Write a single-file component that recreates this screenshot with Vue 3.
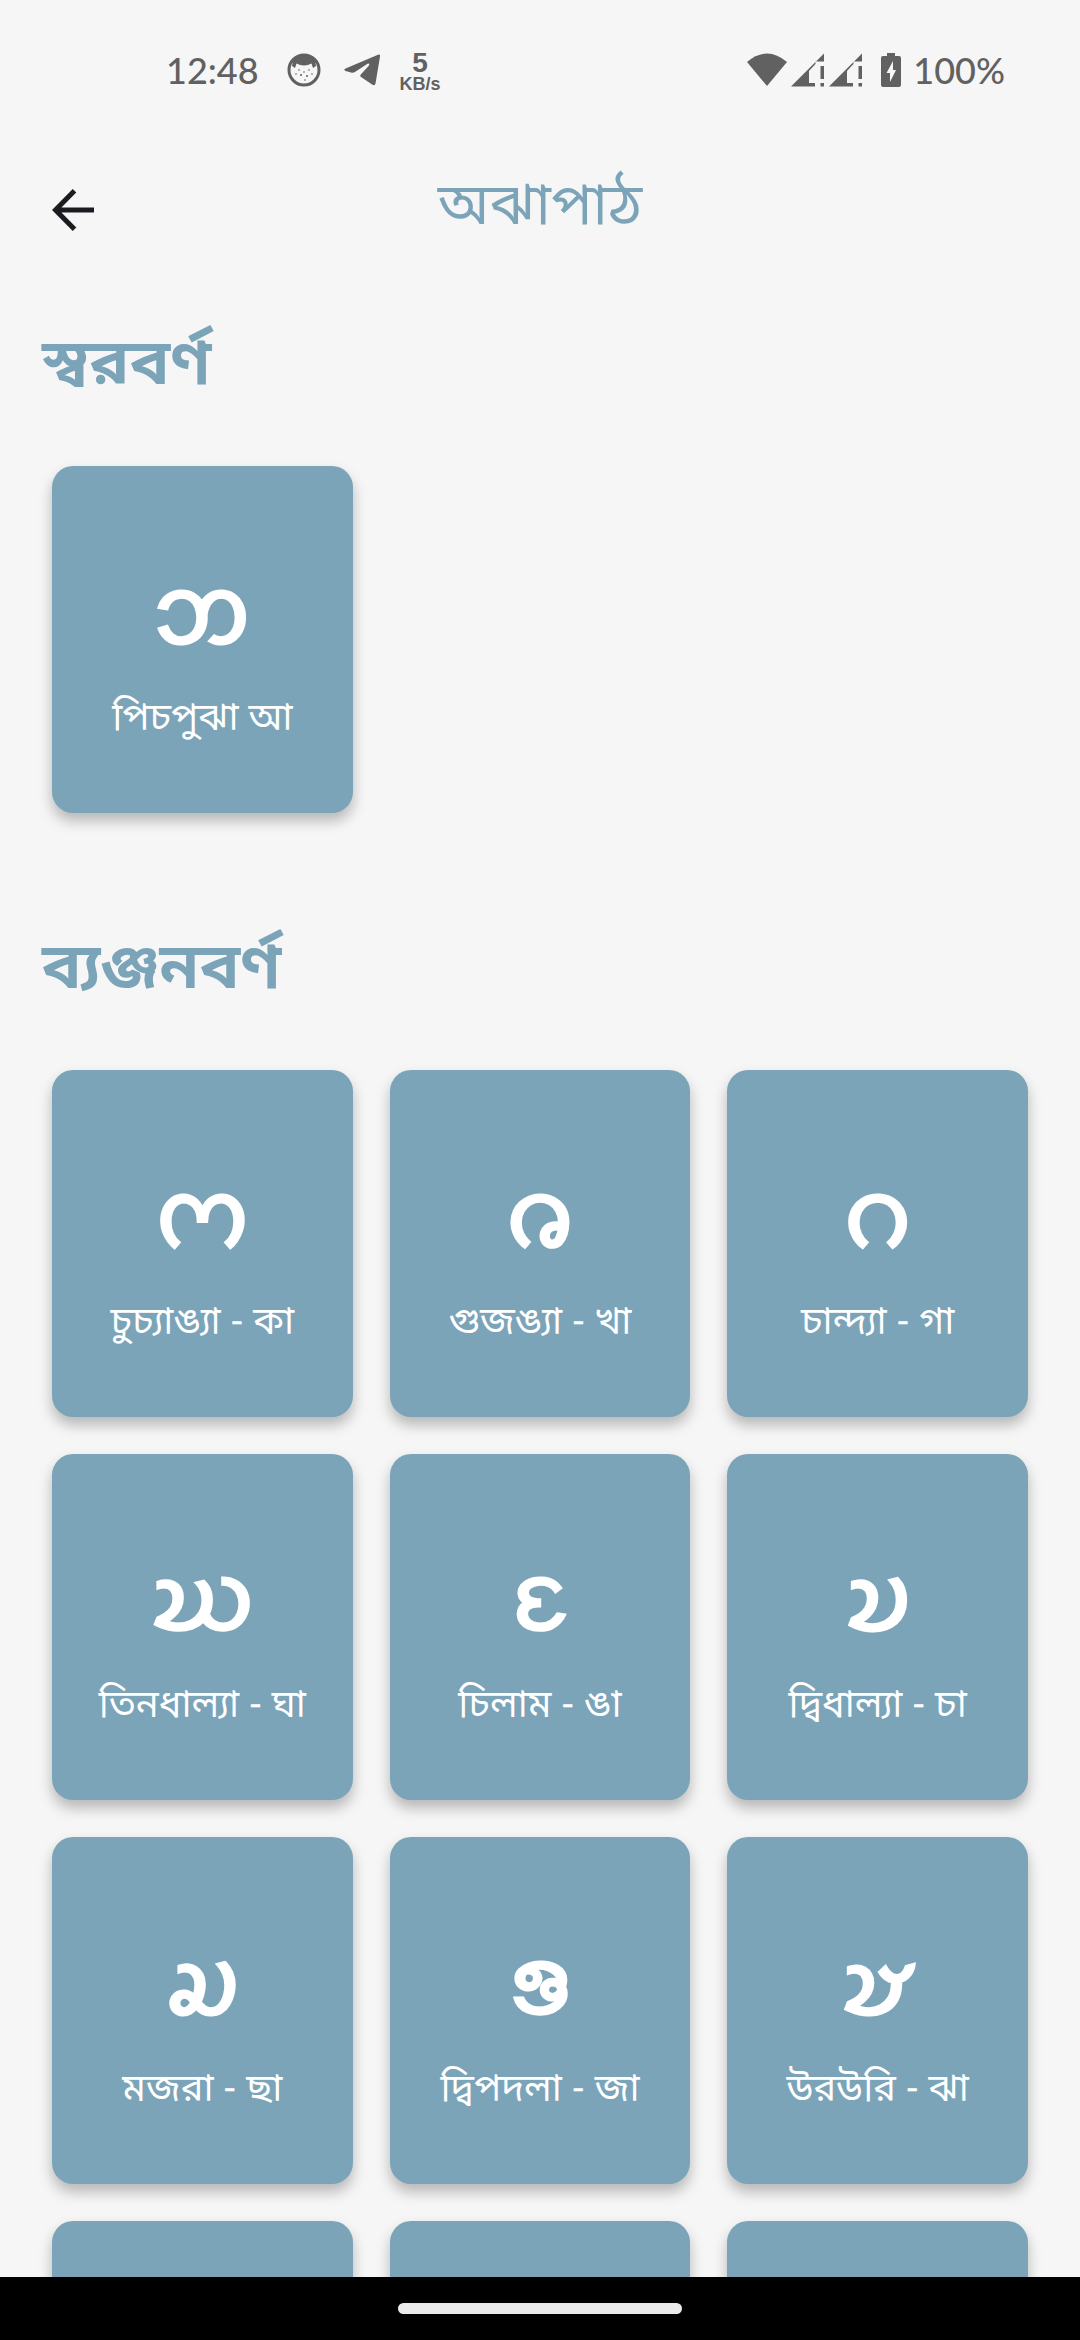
<script setup>
const sections = [
  {
    id: 'vowels',
    title: 'স্বরবর্ণ',
    letters: [{ glyph: '𑄃', label: 'পিচপুঝা আ' }],
  },
  {
    id: 'consonants',
    title: 'ব্যঞ্জনবর্ণ',
    letters: [
      { glyph: '𑄇', label: 'চুচ্যাঙ্যা - কা' },
      { glyph: '𑄈', label: 'গুজঙ্যা - খা' },
      { glyph: '𑄉', label: 'চান্দ্যা - গা' },
      { glyph: '𑄊', label: 'তিনধাল্যা - ঘা' },
      { glyph: '𑄋', label: 'চিলাম - ঙা' },
      { glyph: '𑄌', label: 'দ্বিধাল্যা - চা' },
      { glyph: '𑄍', label: 'মজরা - ছা' },
      { glyph: '𑄎', label: 'দ্বিপদলা - জা' },
      { glyph: '𑄏', label: 'উরউরি - ঝা' },
      { glyph: '', label: '' },
      { glyph: '', label: '' },
      { glyph: '', label: '' },
    ],
  },
]
</script>

<template>
  <div class="screen">
    <div class="status">
      <div class="status-group left">
        <span class="clock">12:48</span>
        <svg class="cat" width="34" height="34" viewBox="0 0 34 34" aria-hidden="true">
          <circle cx="17" cy="17" r="15" fill="none" stroke="currentColor" stroke-width="3" />
          <path fill="currentColor" d="M6 7Q17-3 28 7L29 13L26 15L24.500 10.500Q21 12.500 17 12.500Q13 12.500 9.500 10.500L8 15L5 13Z" />
          <g fill="currentColor">
            <circle cx="12" cy="17" r=".8" /><circle cx="22" cy="17" r=".8" />
            <circle cx="17" cy="19" r=".8" /><circle cx="9" cy="21" r=".8" />
            <circle cx="25" cy="21" r=".8" /><circle cx="14" cy="22" r="1" />
            <circle cx="20" cy="23" r="1" /><circle cx="18" cy="27" r=".8" />
          </g>
        </svg>
        <svg class="plane" width="36" height="32" viewBox="0 0 36 32" aria-hidden="true">
          <path fill="currentColor" d="M1.500 14.500L34 .8Q36.500 0 36 2.500L31.500 29.500Q31 32 28.500 30.800L17 23Q15.500 21.800 17 20.200L25 11.500Q26 9 23.500 9.800L10.500 18.300Q9 19 7 18.500L1.500 17Q-1 15.800 1.500 14.500Z" />
        </svg>
        <span class="speed"><b>5</b><b class="unit">KB/s</b></span>
      </div>
      <div class="status-group right">
        <svg width="40" height="34" viewBox="0 0 40 34" aria-hidden="true">
          <path fill="currentColor" d="M0 9Q20-8 40 9L20 33Z" />
        </svg>
        <svg v-for="n in 2" :key="n" class="signal" width="34" height="34" viewBox="0 0 34 34" aria-hidden="true">
          <path fill="currentColor" d="M0 33.500L33 .5V8.500H24.500V11L18 18V30H24V33.500Z" />
          <path fill="currentColor" d="M29.500 13H33V26H29.500ZM29.500 30H33V33.500H29.500Z" />
        </svg>
        <svg class="battery" width="20" height="34" viewBox="0 0 20 34" aria-hidden="true">
          <path fill="currentColor" d="M6 0H14V3H18Q20 3 20 5V32Q20 34 18 34H2Q0 34 0 32V5Q0 3 2 3H6Z" />
          <path fill="#f6f6f6" d="M12 8V17H15L9 29V20H5.500Z" />
        </svg>
        <span class="percent">100%</span>
      </div>
    </div>

    <header class="bar">
      <button class="back" type="button" aria-label="Back">
        <svg width="42" height="42" viewBox="0 0 42 42" aria-hidden="true">
          <path d="M22.500 1.800L3.500 21L22.500 40.200M3 21H42" fill="none" stroke="currentColor" stroke-width="5" />
        </svg>
      </button>
      <h1>অঝাপাঠ</h1>
    </header>

    <main class="content">
      <section v-for="s in sections" :key="s.id" :aria-labelledby="s.id">
        <h2 :id="s.id">{{ s.title }}</h2>
        <div class="grid">
          <button v-for="(l, i) in s.letters" :key="i" class="card" type="button">
            <span class="glyph">{{ l.glyph }}</span>
            <span class="label">{{ l.label }}</span>
          </button>
        </div>
      </section>
    </main>

    <footer class="nav"><span class="pill"></span></footer>
  </div>
</template>

<style>
body {
  margin: 0;
  background: #f6f6f6;
}
</style>

<style scoped>
.screen {
  display: flex;
  flex-direction: column;
  height: 100vh;
  overflow: hidden;
  font-family: "Noto Sans Bengali UI", "Noto Sans Bengali", "Noto Sans", sans-serif;
  color: #7ca4b9;
}
.status {
  flex: none;
  display: flex;
  justify-content: space-between;
  align-items: center;
  height: 140px;
  padding: 0 75px 0 166px;
  box-sizing: border-box;
  color: #616161;
  font-family: Lato, sans-serif;
  font-size: 36px;
  font-weight: 500;
}
.status-group {
  display: flex;
  align-items: center;
}
.cat {
  margin-left: 28px;
}
.plane {
  margin: 0 20px 0 23px;
}
.speed {
  display: flex;
  flex-direction: column;
  align-items: center;
  font: 28px/28px "Liberation Sans", sans-serif;
}
.unit {
  font-size: 18px;
  line-height: 14px;
}
.right {
  gap: 4px;
}
.battery {
  margin: 0 8px 0 14px;
}
.bar {
  flex: none;
  display: grid;
  grid-template-columns: 42px 1fr 42px;
  align-items: center;
  height: 140px;
  padding: 0 52px;
}
.back {
  display: flex;
  padding: 0;
  border: 0;
  background: none;
  color: #1d1b20;
}
h1 {
  margin: 0;
  text-align: center;
  font-size: 58px;
  font-weight: 400;
  line-height: 80px;
}
.content {
  flex: 1;
  min-height: 0;
  overflow: hidden;
}
h2 {
  margin: 0;
  padding: 38px 42px 48px;
  font-size: 64px;
  font-weight: 700;
  line-height: 100px;
}
.grid {
  display: grid;
  grid-template-columns: repeat(3, 1fr);
  gap: 37px;
  padding: 0 52px;
  margin-bottom: 71px;
}
.card {
  display: flex;
  flex-direction: column;
  align-items: center;
  justify-content: center;
  gap: 31px;
  aspect-ratio: 300 / 346;
  padding: 22px 0 0;
  border: 0;
  border-radius: 21px;
  background: #7ca4b9;
  box-shadow: 0 8px 14px rgba(0, 0, 0, 0.26);
  color: #fff;
  font-family: inherit;
}
.glyph {
  font-family: "Noto Sans Chakma", "Noto Sans", sans-serif;
  font-size: 94px;
  font-weight: 700;
  line-height: 110px;
}
.label {
  font-size: 38px;
  line-height: 60px;
}
.nav {
  flex: none;
  display: flex;
  align-items: center;
  justify-content: center;
  height: 63px;
  background: #000;
}
.pill {
  width: 284px;
  height: 11px;
  border-radius: 6px;
  background: #ebebeb;
}
</style>
